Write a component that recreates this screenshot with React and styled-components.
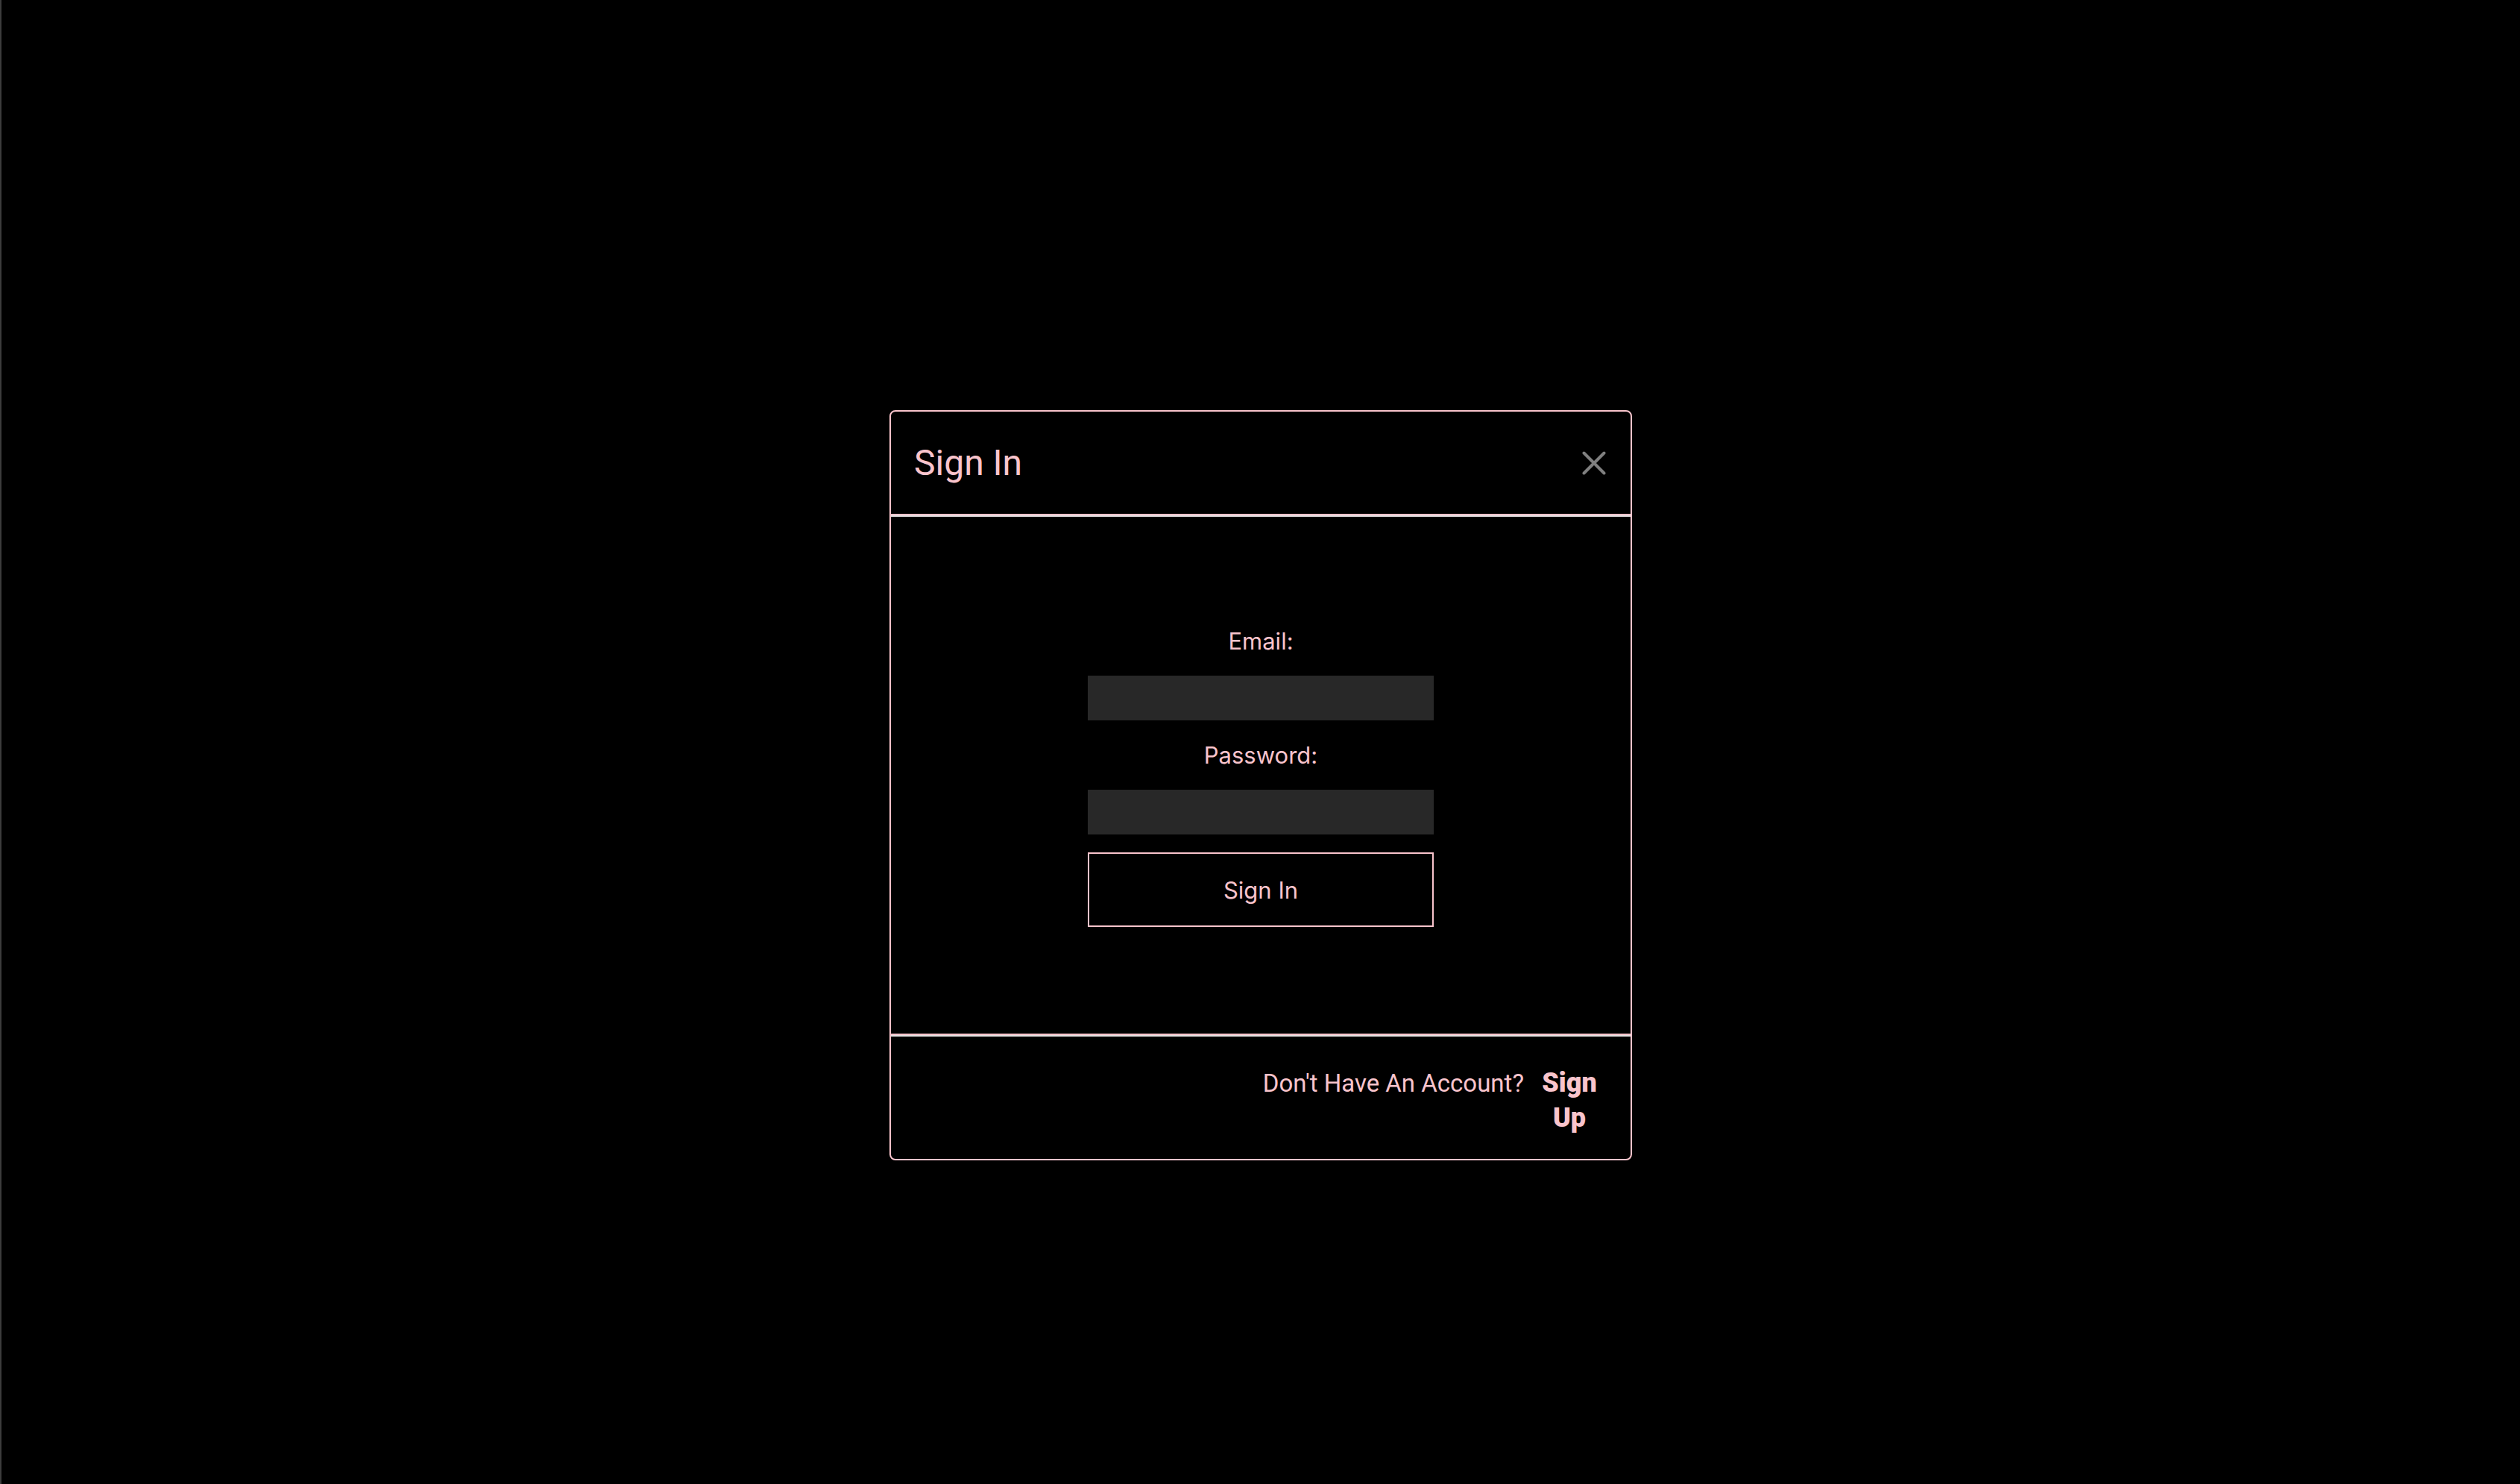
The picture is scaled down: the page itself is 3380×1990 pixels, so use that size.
import React from 'react';
import styled, { createGlobalStyle } from 'styled-components';

const GlobalStyle = createGlobalStyle`
    html, body {
        margin: 0;
        padding: 0;
        background-color: #000;
    }
    * {
        box-sizing: border-box;
    }
`

const Page = styled.div`
    min-height: 100vh;
    background-color: #000;
    border-left: 2px solid #3c3c3c;
    padding-top: 550px;
`
const Modal = styled.div`
    width: 996px;
    margin: 0 auto;
    border: 2px solid #f9c4cc;
    border-radius: 8px;
    background-color: #000;
`
const Header = styled.div`
    height: 139px;
    display: flex;
    align-items: center;
    justify-content: space-between;
    padding: 0 33px 0 31px;
    border-bottom: 2px solid #f9c4cc;
`
const Title = styled.h5`
    margin: 0;
    font-family: Roboto, 'Liberation Sans', sans-serif;
    font-size: 48px;
    font-weight: 400;
    line-height: 1;
    color: #f9c4cc;
`
const CloseButton = styled.button`
    width: 32px;
    height: 32px;
    padding: 0;
    border: none;
    background: none;
    display: flex;
    cursor: pointer;
`
const Body = styled.div`
    border-top: 2px solid #e6e1e3;
    border-bottom: 2px solid #f9c4cc;
    padding: 143px 0 143px;
`
const Form = styled.form`
    width: 464px;
    margin: 0 auto;
    display: flex;
    flex-direction: column;
    align-items: stretch;
`
const Label = styled.label`
    font-family: Inter, 'Noto Sans', sans-serif;
    font-size: 31px;
    line-height: 48px;
    color: #f9c4cc;
    text-align: center;
    margin-bottom: 22px;
`
const Input = styled.input`
    height: 60px;
    border: none;
    outline: none;
    background-color: #282828;
    color: #f9c4cc;
    font-size: 30px;
    padding: 0 12px;
    margin-bottom: ${props => props.last ? '24px' : '23px'};
`
const SubmitButton = styled.button`
    height: 100px;
    border: 2px solid #f9c4cc;
    background-color: transparent;
    color: #f9c4cc;
    font-family: Inter, 'Noto Sans', sans-serif;
    font-size: 31px;
    cursor: pointer;
`
const Footer = styled.div`
    border-top: 2px solid #e6e1e3;
    display: flex;
    justify-content: flex-end;
    align-items: baseline;
    padding: 39px 32px 31px 0;
`
const FooterText = styled.span`
    font-family: Roboto, 'Liberation Sans', sans-serif;
    font-size: 33px;
    font-weight: 400;
    color: #f9c4cc;
`
const SignUp = styled.button`
    width: 100px;
    margin-left: 11px;
    padding: 0;
    border: none;
    background: none;
    font-family: Roboto, 'Liberation Sans', sans-serif;
    font-size: 36px;
    font-weight: 900;
    line-height: 47px;
    text-align: center;
    color: #f9c4cc;
    cursor: pointer;
`

const App = () => {
    return (
        <Page>
            <GlobalStyle />
            <Modal>
                <Header>
                    <Title>Sign In</Title>
                    <CloseButton aria-label='close'>
                        <svg width='32' height='32' viewBox='0 0 32 32'>
                            <path d='M2.5 2.5 L29.5 29.5 M29.5 2.5 L2.5 29.5' stroke='#7f7f7f' strokeWidth='4' strokeLinecap='round' fill='none' />
                        </svg>
                    </CloseButton>
                </Header>
                <Body>
                    <Form onSubmit={e => e.preventDefault()}>
                        <Label>Email:</Label>
                        <Input type='email' />
                        <Label>Password:</Label>
                        <Input type='password' last />
                        <SubmitButton type='submit'>Sign In</SubmitButton>
                    </Form>
                </Body>
                <Footer>
                    <FooterText>Don't Have An Account?</FooterText>
                    <SignUp>Sign Up</SignUp>
                </Footer>
            </Modal>
        </Page>
    )
}

export default App;
